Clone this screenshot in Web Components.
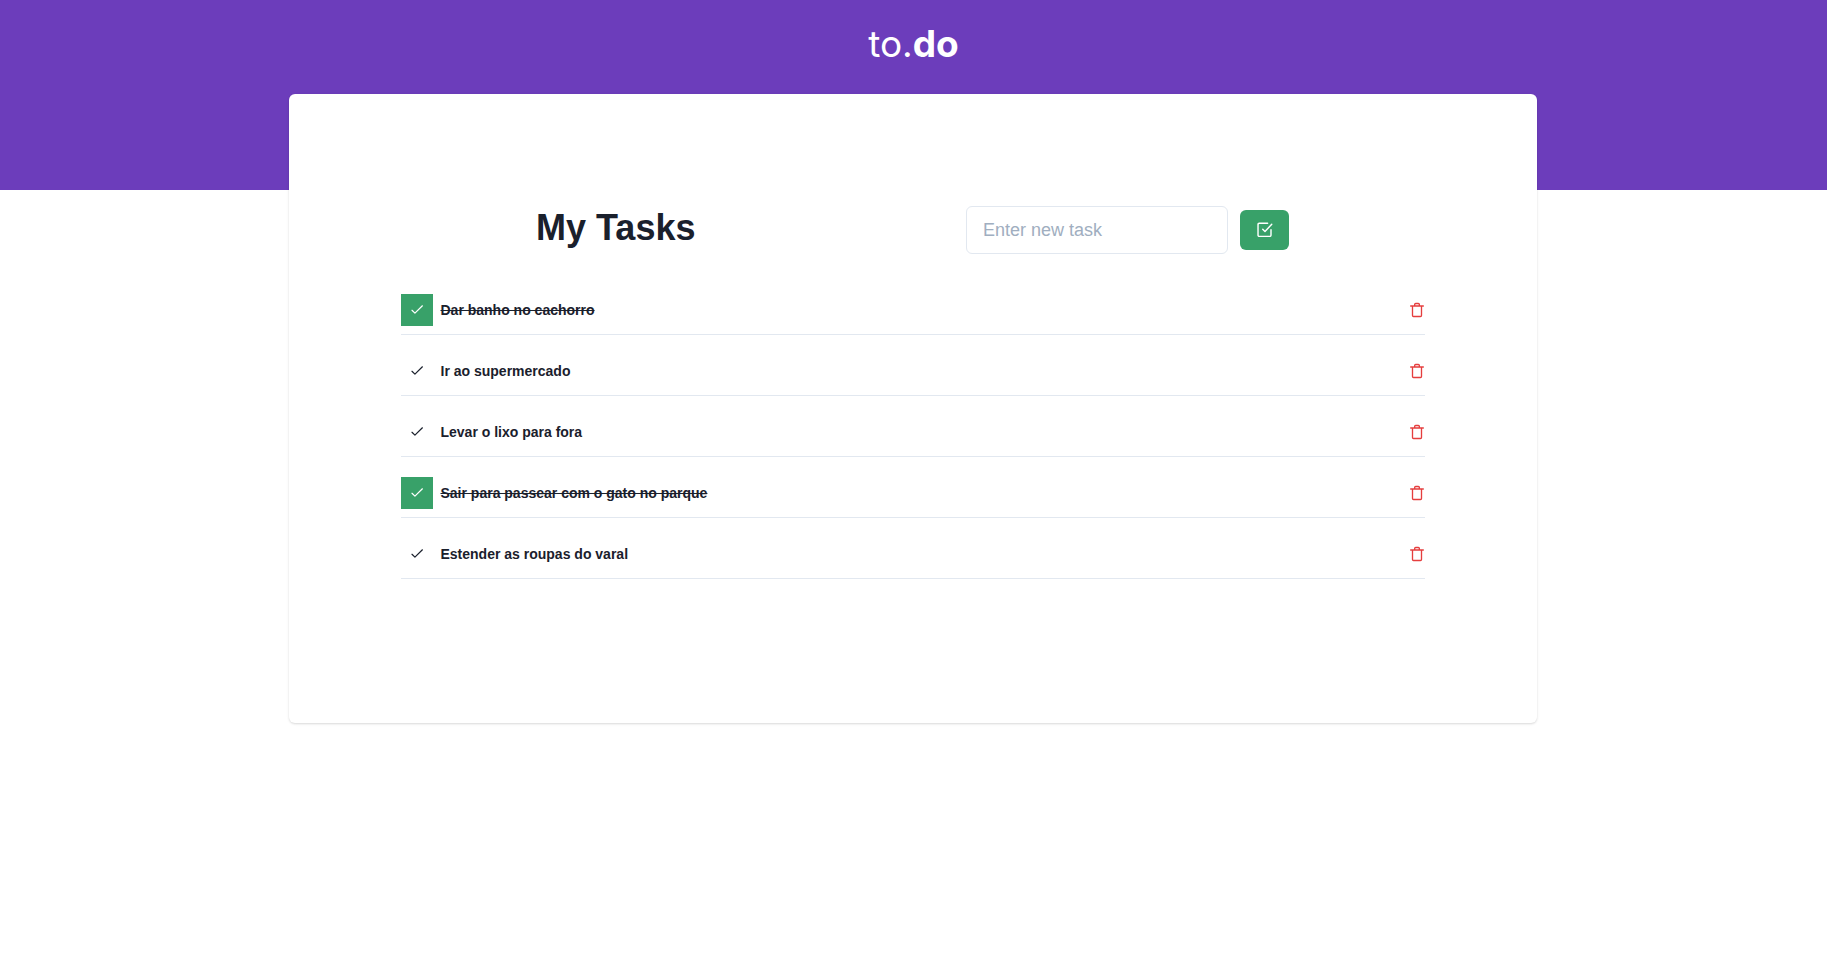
<!DOCTYPE html>
<html lang="en">
<head>
<meta charset="utf-8">
<title>to.do</title>
<style>
body{margin:0;background:#fff;color:#1a202c;font:16px/1.5 "Liberation Sans",Arial,sans-serif}
</style>
</head>
<body>
<todo-app></todo-app>
<script>
const define = (name, html, setup) => customElements.define(name, class extends HTMLElement {
  connectedCallback() {
    if (this.shadowRoot) return;
    const t = document.createElement('template');
    t.innerHTML = html;
    this.attachShadow({mode: 'open'}).append(t.content.cloneNode(true));
    if (setup) setup(this, this.shadowRoot);
  }
});

const glyphs = {
  check: '<path d="M4.500 12.400L8.900 16.700L20.100 5.700" stroke-width="1.8"/>',
  square: '<path d="M9 11L12 14L21 4.300" stroke-width="1.9"/><path d="M20 11.5V19a1.500 1.500 0 0 1-1.500 1.500H4.200A1.500 1.500 0 0 1 2.700 19V4.500A1.500 1.500 0 0 1 4.200 3H15.500" stroke-width="1.9"/>',
  trash: '<path d="M2.500 6H21.500M5.250 6V20.250a1.500 1.500 0 0 0 1.500 1.500H17.250a1.500 1.500 0 0 0 1.500-1.500V6M8.500 6V3.750a1.500 1.500 0 0 1 1.500-1.500h4a1.500 1.500 0 0 1 1.500 1.500V6" stroke-width="2"/>'
};

define('todo-icon', `<style>
:host{display:block;width:16px;height:16px;flex:none}
:host([name=square]){width:18px;height:18px}
svg{display:block;width:100%;height:100%;fill:none;stroke:currentColor;stroke-width:2;stroke-linecap:round;stroke-linejoin:round}
</style><svg viewBox="0 0 24 24"></svg>`, (host, root) => {
  root.querySelector('svg').innerHTML = glyphs[host.getAttribute('name')];
});

define('todo-logo', `<style>
:host{display:flex;justify-content:center;color:#fff;font:400 37px/44px Inter,sans-serif}
b{font-weight:700}
</style><span>to.<b>do</b></span>`);

define('todo-header', `<style>
:host{display:block;box-sizing:border-box;height:190px;padding-top:22px;background:#6c3dbb}
</style><slot></slot>`);

define('todo-card', `<style>
:host{display:block;position:relative;box-sizing:border-box;width:1248px;height:629px;margin:-96px 290px 0 289px;padding:112px 112px 0;background:#fff;border-radius:6px;box-shadow:0 1px 3px rgba(0,0,0,.1),0 1px 2px rgba(0,0,0,.06)}
</style><slot></slot>`);

define('todo-form', `<style>
:host{display:flex;align-items:center;gap:12px}
input{box-sizing:border-box;width:262px;height:48px;padding:0 16px;border:1px solid #e2e8f0;border-radius:6px;background:#fff;font:18px "Liberation Sans",sans-serif;color:inherit}
input::placeholder{color:#a0aec0;opacity:1}
button{display:flex;align-items:center;justify-content:center;width:49px;height:40px;padding:0;border:0;border-radius:6px;background:#38a169;color:#fff}
</style><input placeholder="Enter new task"><button aria-label="Add"><todo-icon name="square"></todo-icon></button>`);

define('todo-item', `<style>
:host{display:flex;align-items:center;height:32px;padding:20px 0 8px;border-bottom:1px solid #e2e8f0;font-weight:700;font-size:14px}
.mark{display:flex;align-items:center;justify-content:center;width:32px;height:32px;margin-right:7.5px}
:host([done]) .mark{background:#38a169;color:#fff}
:host([done]) .label{text-decoration:line-through 1px}
.label{flex:1;line-height:22px}
.del{color:#e53e3e}
</style><span class="mark"><todo-icon name="check"></todo-icon></span><span class="label"><slot></slot></span><todo-icon class="del" name="trash"></todo-icon>`);

define('todo-app', `<style>
:host{display:block;min-height:100vh}
.top{display:grid;grid-template-columns:429.5px 1fr;height:48px;margin-bottom:20px}
h1{margin:0;font-size:36px;line-height:43px;text-align:center}
todo-form{margin-left:135.5px}
</style>
<todo-header><todo-logo></todo-logo></todo-header>
<todo-card>
<div class="top"><h1>My Tasks</h1><todo-form></todo-form></div>
<todo-item done>Dar banho no cachorro</todo-item>
<todo-item>Ir ao supermercado</todo-item>
<todo-item>Levar o lixo para fora</todo-item>
<todo-item done>Sair para passear com o gato no parque</todo-item>
<todo-item>Estender as roupas do varal</todo-item>
</todo-card>`);
</script>
</body>
</html>
